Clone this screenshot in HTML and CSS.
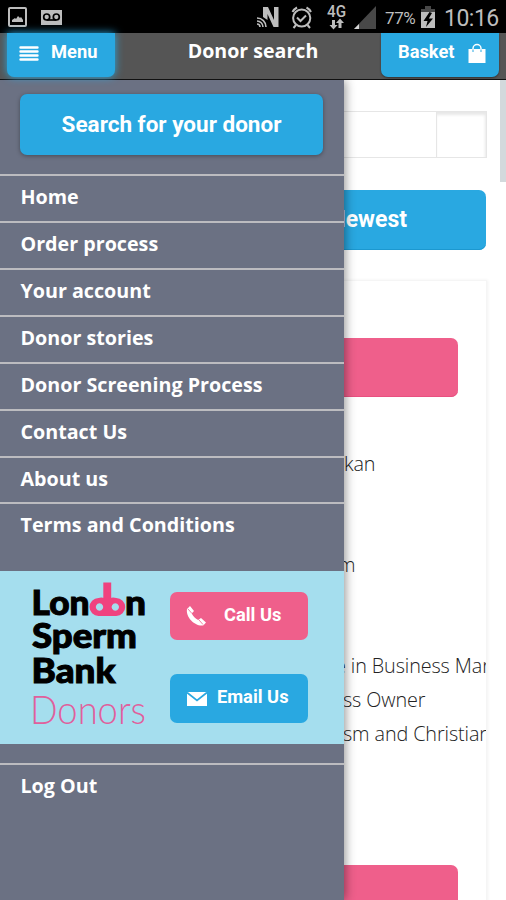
FILE: index.html
```
<!DOCTYPE html>
<html lang="en">
<head>
<meta charset="utf-8">
<title>Donor search</title>
<link rel="stylesheet" href="styles.css">
</head>
<body>
<div class="status">
  <svg class="status-left" width="70" height="33" viewBox="0 0 70 33">
    <rect x="9" y="8" width="17" height="18" rx="1" fill="none" stroke="#bdbdbd" stroke-width="2"/>
    <path d="M12 22v-2l3-2 1 1 2-3 2 2 1-1 2 3v2z" fill="#bdbdbd"/>
    <rect x="41" y="10" width="21" height="15" fill="#bdbdbd"/>
    <g fill="none" stroke="#000" stroke-width="1.7"><circle cx="46.7" cy="17" r="3"/><circle cx="56.3" cy="17" r="3"/><path d="M46.7 20h9.6"/></g>
  </svg>
  <svg class="status-right" width="122" height="33" viewBox="0 0 122 33">
    <path d="M7 17V7h5l6 13V7h4.500v20h-5L11.500 14v6z" fill="#bdbdbd"/>
    <g fill="none" stroke="#bdbdbd" stroke-width="1.600"><path d="M1 24a3 3 0 0 1 3 3M1 21a6 6 0 0 1 6 6M1 18a9 9 0 0 1 9 9"/></g>
    <g fill="none" stroke="#bdbdbd" stroke-width="2"><circle cx="45.700" cy="18" r="8.600"/><path d="M36.500 12a11 11 0 0 1 4.500-4.500M50.500 7.500a11 11 0 0 1 4.500 4.500M40 25l-2.500 3M51.500 25l2.500 3M41 17.500l3.500 3.500 5.500-5.500"/></g>
    <text class="network" x="71" y="16.500" textLength="19" lengthAdjust="spacingAndGlyphs">4G</text>
    <path d="M76 20h3v5h2.500L77.500 29.500 73.500 25H76zM82.500 28h3v-5H88L84 18.500 80 23h2.500z" fill="#bdbdbd"/>
    <path d="M98 29L120 6v23z" fill="#484848"/><path d="M98 29l5-5v5z" fill="#d5d5d5"/>
  </svg>
  <span class="percent">77%</span>
  <svg class="battery" width="16" height="24" viewBox="0 0 16 24">
    <path d="M5 1h6v3h4v5H1V4h4z" fill="#484848"/><path d="M1 7h14v16H1z" fill="#bdbdbd"/>
    <path d="M9.500 7L3.500 16h4L6 22l7-8.500H8.800L12 8z" fill="#000"/>
  </svg>
  <span class="clock">10:16</span>
</div>
<header class="header">
  <button class="head-btn menu-btn">
    <svg width="20" height="17" viewBox="0 0 20 17"><path d="M1.500 2.500h17M1.500 6.500h17M1.500 10.500h17M1.500 14.500h17" stroke="#fff" stroke-width="2.400" stroke-linecap="round"/></svg>
    <span>Menu</span>
  </button>
  <h1 class="title">Donor search</h1>
  <button class="head-btn basket-btn">
    <span>Basket</span>
    <svg width="18" height="21" viewBox="0 0 18 21"><path d="M.5 6h17v14H.5z" fill="#fff"/><path d="M5 10V5.500a4 4 0 0 1 8 0V10" fill="none" stroke="#fff" stroke-width="1.500"/><path d="M5 6.500V9M13 6.500V9" stroke="#29a8e1" stroke-width="1"/></svg>
  </button>
</header>
<div class="stage">
  <main class="content">
    <div class="filter"><div class="field"></div><div class="toggle"></div></div>
    <div class="sort"><span>Newest</span></div>
    <section class="card">
      <div class="pink"></div>
      <div class="details">
        <p>kan</p><p></p><p></p><p class="unit">m</p><p></p><p></p>
        <p class="edu">e in Business Man</p><p class="job">ss Owner</p><p class="faith">sm and Christian</p>
      </div>
      <div class="pink second"></div>
    </section>
  </main>
  <nav class="drawer">
    <a class="search">Search for your donor</a>
    <ul class="links">
      <li>Home</li><li>Order process</li><li>Your account</li><li>Donor stories</li>
      <li>Donor Screening Process</li><li>Contact Us</li><li>About us</li><li>Terms and Conditions</li>
    </ul>
    <div class="contact">
      <svg class="logo" width="120" height="154" viewBox="30 577 120 154">
        <g class="brand">
          <text x="31.500" y="615" textLength="58" lengthAdjust="spacingAndGlyphs">Lon</text>
          <text x="125" y="615" textLength="21" lengthAdjust="spacingAndGlyphs">n</text>
          <text x="32" y="647.500" textLength="105" lengthAdjust="spacingAndGlyphs">Sperm</text>
          <text x="31.500" y="683" textLength="84" lengthAdjust="spacingAndGlyphs">Bank</text>
        </g>
        <path d="M103.300 582.500h7.900V600h-7.900z" fill="#f0427f"/>
        <path fill-rule="evenodd" fill="#f0427f" d="M98.500 598a9.200 9.200 0 0 1 8.700 2 9.200 9.200 0 0 1 9-2 9 9 0 0 1 0 18H98.500a9 9 0 0 1 0-18zM99.500 603.300a3.700 3.700 0 1 0 .01 0zM115.300 603.300a3.700 3.700 0 1 0 .01 0z"/>
        <text class="donors" x="30" y="723.500" textLength="116" lengthAdjust="spacingAndGlyphs">Donors</text>
      </svg>
      <div class="actions">
        <a class="action call"><svg width="22" height="22" viewBox="0 0 22 22"><path d="M2 4L5 1l4 5-2.300 2.500c1.500 3 3.500 5 6.500 6.500L16 13l5 4.500-2.500 2.800C11 22 .5 13 2 4z" fill="#fff"/><path d="M3 4l4 4.500M14 15l4 4.500" stroke="#ef5f8b" stroke-width=".8"/></svg><span>Call Us</span></a>
        <a class="action email"><svg width="22" height="16" viewBox="0 0 22 16"><path d="M1 1h20v14H1z" fill="#fff"/><path d="M1 1.500l10 8 10-8" fill="none" stroke="#29a8e1" stroke-width="1.700"/></svg><span>Email Us</span></a>
      </div>
    </div>
    <a class="logout">Log Out</a>
  </nav>
  <div class="scrollbar"></div>
</div>
</body>
</html>
```

FILE: styles.css
```
* { box-sizing: border-box; }
body {
  margin: 0;
  width: 506px;
  height: 900px;
  overflow: hidden;
  display: flex;
  flex-direction: column;
  font-family: "Open Sans", sans-serif;
  color: #fff;
  background: #fff;
}
ul, p, h1 { margin: 0; padding: 0; list-style: none; }
svg { display: block; flex: none; }
.status {
  flex: none;
  height: 33px;
  background: #000;
  display: flex;
  font-family: Roboto, sans-serif;
  color: #bdbdbd;
}
.status-left { width: 70px; }
.status-right { margin-left: 186px; }
.network { font: 500 17px Roboto, sans-serif; fill: #bdbdbd; }
.percent { margin-left: 7px; width: 35px; font-size: 17px; line-height: 37px; letter-spacing: -.4px; }
.battery { margin-top: 5px; }
.clock { margin-left: 8px; font-size: 23px; line-height: 37px; white-space: nowrap; letter-spacing: -.5px; }
.header {
  flex: none;
  height: 47px;
  background: #555;
  border-bottom: 1px solid #111;
  display: flex;
  position: relative;
  z-index: 2;
}
.head-btn {
  height: 44px;
  border: 0;
  padding: 0;
  border-radius: 0 0 7px 7px;
  background: #29a8e1;
  color: #fff;
  font: 700 18.300px/37px Roboto, sans-serif;
  display: flex;
}
.menu-btn { margin-left: 7px; width: 108px; padding-left: 12px; gap: 12px; box-shadow: 0 0 9px #29a8e1; }
.menu-btn svg { margin-top: 12px; }
.title { width: 266px; text-align: center; font-size: 19.600px; line-height: 35px; font-weight: 700; padding-left: 10px; }
.basket-btn { width: 118px; padding-left: 17px; gap: 13px; box-shadow: 0 1px 2px #333; }
.basket-btn svg { margin-top: 10px; }
.stage { flex: 1; position: relative; overflow: hidden; }
.content { height: 100%; padding: 31px 19px 0 20px; overflow: hidden; color: #222; }
.filter { height: 47px; margin-right: 0; display: flex; border: 1px solid #e6e6e6; }
.field { flex: 1; }
.toggle { width: 50px; border-left: 1px solid #e6e6e6; box-shadow: inset -1px 3px 3px #e8e8e8; }
.sort {
  margin-top: 32px;
  margin-right: 1px;
  height: 60px;
  border-radius: 7px;
  background: #29a8e1;
  box-shadow: inset 0 -1px #1c98d0;
  color: #fff;
  font: 700 23px/59px Roboto, sans-serif;
  display: flex;
  justify-content: flex-end;
  padding-right: 79px;
}
.card { margin-top: 30px; height: 700px; border: 1px solid #f5f5f5; box-shadow: 1px 0 3px #f2f2f2; overflow: hidden; }
.pink { height: 59px; margin: 57px 28px 0 27px; border-radius: 7px; background: #ef5f8b; box-shadow: inset 0 -1px #e85080; }
.details { margin: 50px 0 0 323px; }
.details p { height: 33.700px; font-size: 19.800px; line-height: 33.600px; font-weight: 300; letter-spacing: -.1px; white-space: nowrap; }
.details .unit { margin-left: -6px; }
.details .edu { margin-left: -9px; }
.details .job { margin-left: -1px; }
.details .faith { margin-left: -1px; }
.second { margin-top: 115px; }
.drawer {
  position: absolute;
  inset: 0 auto 0 0;
  width: 344px;
  background: #6b7183;
  box-shadow: 1px 0 10px rgba(0, 0, 0, .45);
  display: flex;
  flex-direction: column;
}
.search {
  flex: none;
  margin: 14px 21px 0 20px;
  height: 61px;
  border-radius: 7px;
  background: #29a8e1;
  box-shadow: 0 1px 4px rgba(0, 0, 0, .35);
  text-align: center;
  font: 700 22.500px/60px Roboto, sans-serif;
}
.links { margin-top: 19px; height: 397px; flex: none; }
.links li, .logout {
  height: 47px;
  border-top: 2px solid #bcbcc0;
  padding-left: 20.500px;
  font-size: 19.700px;
  line-height: 41px;
  font-weight: 700;
  white-space: nowrap;
}
.links li { height: 46.930px; }
.contact { flex: none; height: 173px; background: #a5deee; display: flex; }
.logo { margin: 6px 0 0 30px; }
.brand { font: 900 34px Lato, sans-serif; fill: #000; stroke: #000; stroke-width: 1; }
.donors { font: 300 40px Lato, sans-serif; fill: #e0609c; }
.actions { margin: 21px 0 0 20px; width: 138px; display: flex; flex-direction: column; gap: 34px; }
.action { height: 48px; border-radius: 7px; display: flex; font: 700 18.300px/45px Roboto, sans-serif; white-space: nowrap; }
.call { background: #ef5f8b; padding-left: 15px; gap: 17px; }
.call svg { margin-top: 13px; }
.email { background: #29a8e1; padding-left: 16px; gap: 9px; height: 49px; }
.email svg { margin-top: 17px; }
.logout { margin-top: 19px; }
.scrollbar { position: absolute; top: 0; right: 0; width: 6px; height: 102px; background: #d3d9dc; }
```
